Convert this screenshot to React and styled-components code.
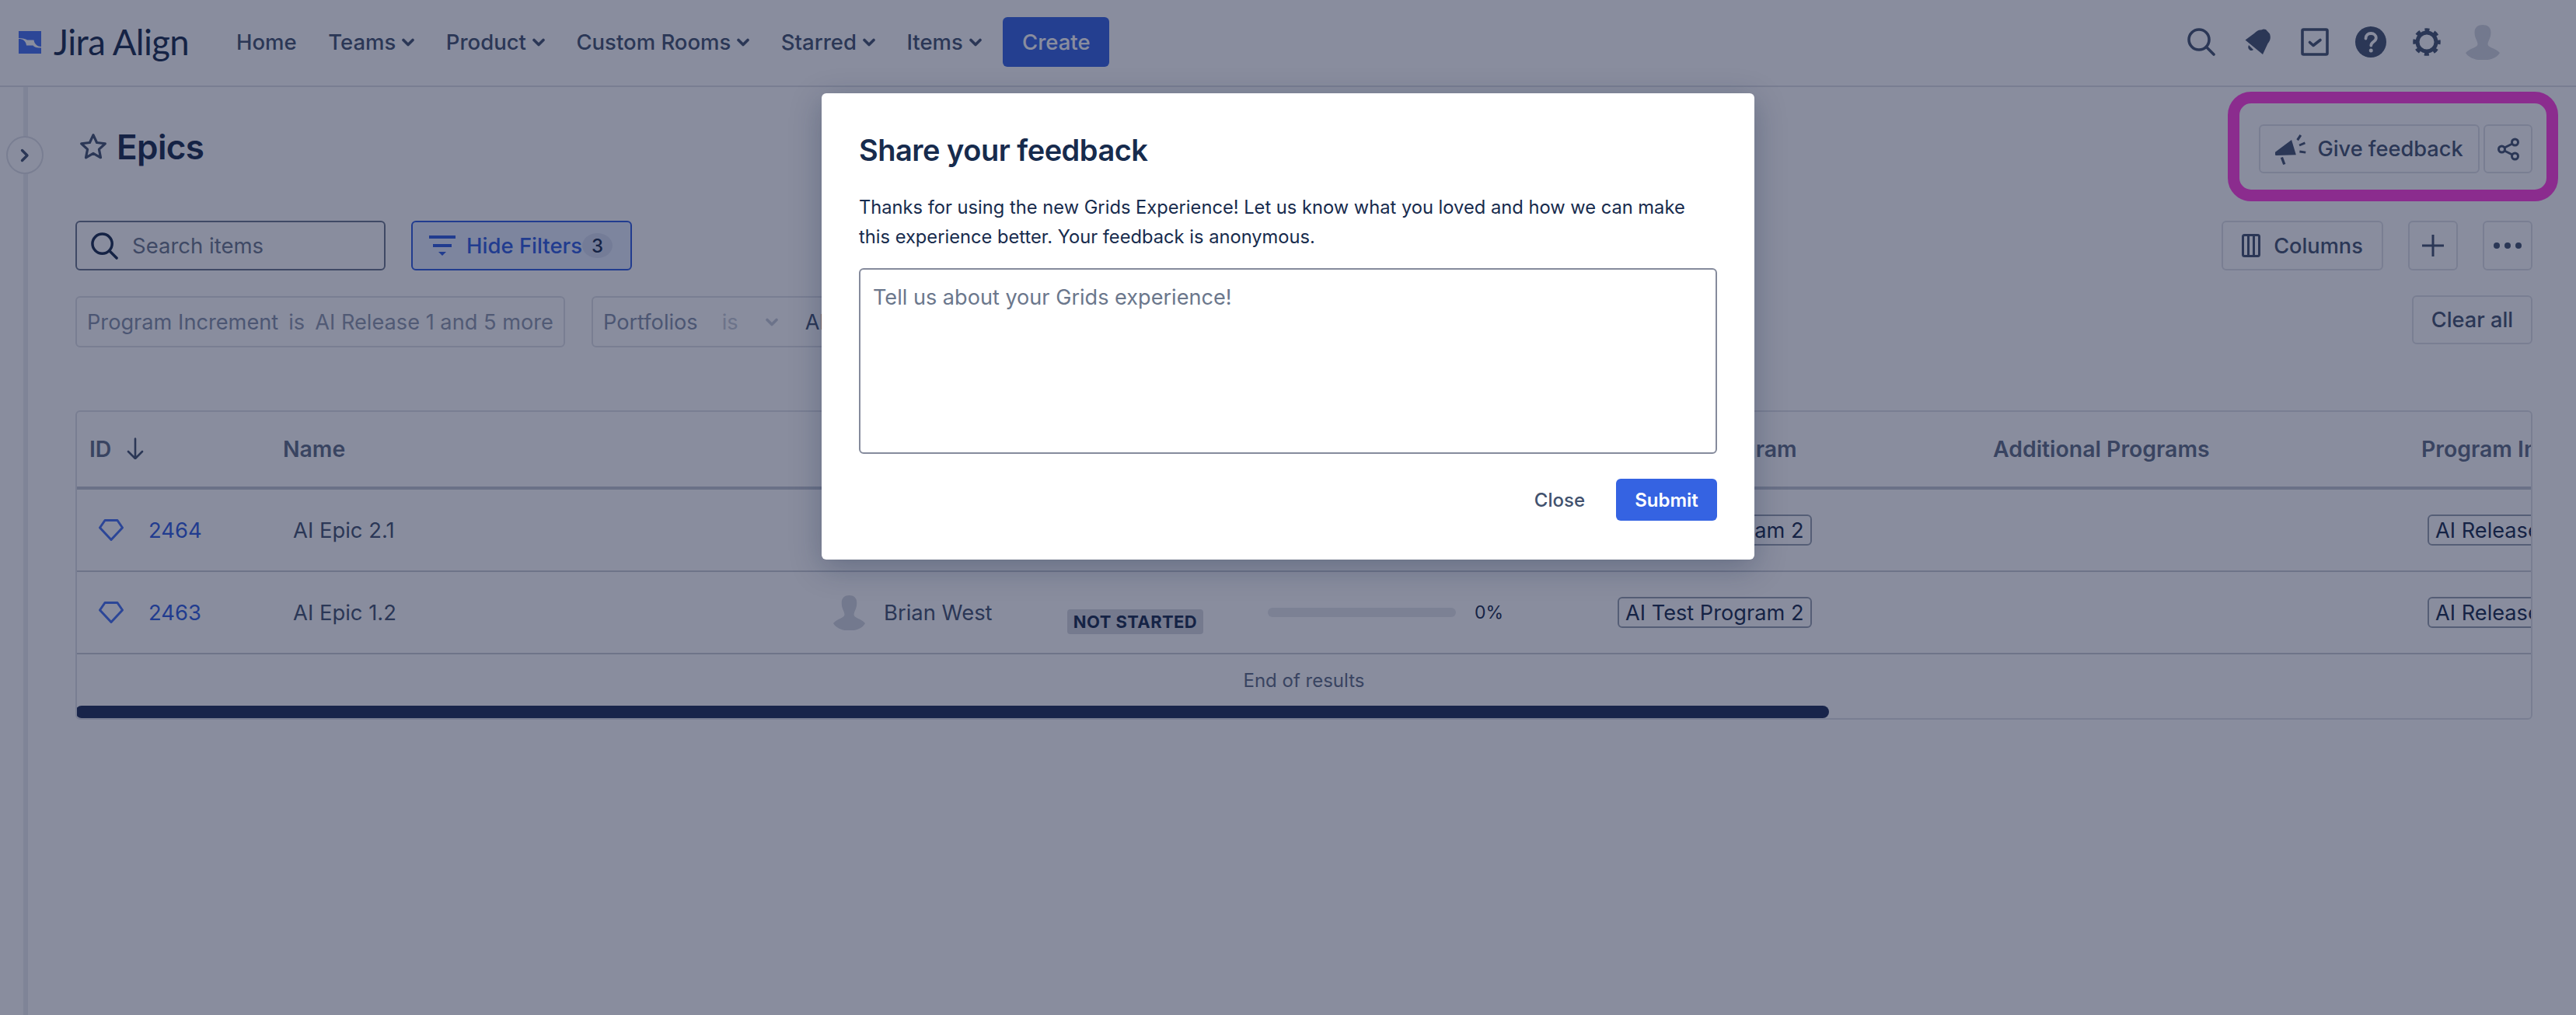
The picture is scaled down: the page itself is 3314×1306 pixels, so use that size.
import React from "react";
import styled, { createGlobalStyle } from "styled-components";

const Global = createGlobalStyle`
  html, body { margin: 0; padding: 0; background: #fff; }
  * { box-sizing: border-box; }
  body { font-family: Inter, "Liberation Sans", sans-serif; color: #172B4D; }
`;

const Page = styled.div`
  position: relative;
  width: 3314px;
  height: 1306px;
  overflow: hidden;
  background: #fff;
`;

/* ---------- top navigation ---------- */
const Nav = styled.header`
  height: 112px;
  display: flex;
  align-items: center;
  padding: 0 98px 2px 24px;
  border-bottom: 2px solid #DFE1E6;
`;
const Logo = styled.div`
  display: flex;
  align-items: center;
  gap: 16px;
  width: 280px;
  flex: none;
`;
const LogoWord = styled.span`
  font-family: Lato, sans-serif;
  font-weight: 400;
  font-size: 45.5px;
  line-height: 50px;
  letter-spacing: -0.6px;
  color: #172B4D;
`;
const Menu = styled.nav`
  display: flex;
  align-items: center;
  gap: 40.5px;
`;
const MenuItem = styled.span`
  display: flex;
  align-items: center;
  gap: 8px;
  font-size: 27.5px;
  font-weight: 500;
  color: #42526E;
  white-space: nowrap;
`;
const CreateButton = styled.button`
  height: 64px;
  width: 137px;
  margin-left: -13px;
  border: 0;
  border-radius: 6px;
  background: #3563E2;
  color: #fff;
  font: 500 27.5px Inter, sans-serif;
`;
const NavIcons = styled.div`
  margin-left: auto;
  display: flex;
  align-items: center;
  gap: 34px;
  & > :nth-child(2), & > :nth-child(3) { margin-left: 4px; }
  & > :nth-child(6) { margin-left: -2px; }
`;

/* ---------- body ---------- */
const Body = styled.div`
  display: flex;
  height: 1194px;
`;
const Rail = styled.aside`
  position: relative;
  flex: none;
  width: 36px;
  border-right: 6px solid #EBECF0;
`;
const RailToggle = styled.button`
  position: absolute;
  left: 8px;
  top: 63px;
  width: 48px;
  height: 49px;
  padding: 0;
  border: 2px solid #DFE1E6;
  border-radius: 50%;
  background: #fff;
  display: flex;
  align-items: center;
  justify-content: center;
`;
const Main = styled.main`
  flex: 1;
  min-width: 0;
  padding: 48px 56px 0 61px;
`;
const TitleRow = styled.div`
  display: flex;
  align-items: center;
  justify-content: space-between;
  height: 63px;
`;
const Title = styled.h1`
  margin: 0;
  display: flex;
  align-items: center;
  gap: 12px;
  padding: 0 0 5px 5px;
  font-size: 44px;
  font-weight: 600;
  letter-spacing: -0.6px;
  color: #172B4D;
`;
const ButtonGroup = styled.div`
  display: flex;
  align-items: center;
  gap: ${p => p.$gap}px;
`;
const OutlineButton = styled.button`
  height: ${p => p.$h || 64}px;
  width: ${p => p.$w}px;
  display: flex;
  align-items: center;
  justify-content: center;
  gap: ${p => p.$gap || 14}px;
  padding: 0;
  background: #fff;
  border: 2px solid #DFE1E6;
  border-radius: 6px;
  font: 500 27.2px Inter, sans-serif;
  color: #42526E;
`;
const ToolRow = styled.div`
  margin-top: 61px;
  display: flex;
  align-items: center;
  height: 64px;
`;
const SearchBox = styled.div`
  width: 399px;
  height: 64px;
  display: flex;
  align-items: center;
  gap: 18px;
  padding-left: 18px;
  border: 2px solid #6B778C;
  border-radius: 6px;
  font-size: 27.5px;
  color: #6B778C;
`;
const FilterToggle = styled.div`
  margin-left: 33px;
  width: 284px;
  height: 64px;
  display: flex;
  align-items: center;
  padding-left: 21px;
  background: #E6EEFF;
  border: 2px solid #2F5CE0;
  border-radius: 6px;
  font-size: 27.5px;
  font-weight: 500;
  color: #2F5CE0;
`;
const FilterLabel = styled.span`
  margin-left: 14px;
`;
const FilterCount = styled.span`
  width: 39px;
  height: 32px;
  display: flex;
  align-items: center;
  justify-content: center;
  border-radius: 50%;
  background: rgba(9, 30, 66, 0.08);
  color: #172B4D;
  font-size: 24px;
  font-weight: 500;
`;
const ToolActions = styled(ButtonGroup)`
  margin-left: auto;
`;
const FilterRow = styled.div`
  margin-top: 32px;
  height: 67px;
  display: flex;
  align-items: flex-start;
  gap: 34px;
`;
const FilterChip = styled.div`
  height: 66px;
  margin-top: 1px;
  padding: 0 13px;
  display: flex;
  align-items: center;
  white-space: nowrap;
  border: 2px solid #DFE1E6;
  border-radius: 6px;
  font-size: 27.2px;
  color: #8F99AD;
`;
const ChipField = styled.span`
  color: #8490A8;
`;
const ChipOperator = styled.span`
  margin-left: ${p => p.$ml}px;
  color: ${p => p.$muted ? "#C5CAD6" : "#8F99AD"};
`;
const ChipValue = styled.span`
  margin-left: ${p => p.$ml}px;
  color: ${p => p.$dark ? "#42526E" : "#8F99AD"};
`;
const ChipChevron = styled.span`
  margin-left: 34px;
  display: flex;
`;
const ClearAll = styled(OutlineButton)`
  margin-left: auto;
  flex: none;
`;

/* ---------- table ---------- */
const Table = styled.section`
  margin-top: 81px;
  width: 3161px;
  height: 398px;
  display: flex;
  flex-direction: column;
  overflow: hidden;
  border: 2px solid #DFE1E6;
  border-radius: 6px;
`;
const COLS = "249px 707px 301px 258px 450px 484px 551px 400px";
const HeadRow = styled.div`
  flex: none;
  display: grid;
  grid-template-columns: ${COLS};
  align-items: center;
  height: 100px;
  padding-bottom: 2px;
  border-bottom: 4px solid #C1C7D0;
`;
const HeadCell = styled.div`
  display: flex;
  align-items: center;
  gap: 20px;
  padding-left: 16px;
  font-size: 28.4px;
  font-weight: 600;
  color: #5E6C84;
  white-space: nowrap;
`;
const Row = styled.div`
  flex: none;
  display: grid;
  grid-template-columns: ${COLS};
  align-items: center;
  height: 106px;
  border-bottom: 2px solid #C8CCD4;
`;
const Cell = styled.div`
  display: flex;
  align-items: center;
  padding-left: ${p => p.$pl ?? 17}px;
  font-size: 27.4px;
  color: #42526E;
  white-space: nowrap;
`;
const IdLink = styled.a`
  margin-left: 32px;
  color: #2F5CE0;
`;
const OwnerName = styled.span`
  margin-left: 24px;
`;
const Lozenge = styled.span`
  position: relative;
  top: 12px;
  width: 175px;
  height: 32px;
  display: flex;
  align-items: center;
  justify-content: center;
  border-radius: 4px;
  background: #D6D8DF;
  color: #172B4D;
  font-size: 22px;
  font-weight: 700;
  letter-spacing: 0.4px;
`;
const ProgressTrack = styled.div`
  width: 242px;
  height: 12px;
  border-radius: 6px;
  background: #E4E6EB;
`;
const ProgressValue = styled.span`
  margin-left: 24px;
  font-size: 23px;
  color: #172B4D;
`;
const Tag = styled.span`
  height: 40px;
  padding: 0 8px;
  display: flex;
  align-items: center;
  border: 2px solid #97A0AF;
  border-radius: 6px;
  font-size: 27.2px;
  color: #172B4D;
`;
const EndRow = styled.div`
  flex: 1;
  display: flex;
  align-items: center;
  justify-content: center;
  font-size: 24px;
  color: #5E6C84;
`;
const ScrollThumb = styled.div`
  flex: none;
  width: 2256px;
  height: 16px;
  margin-left: -2px;
  border-radius: 8px;
  background: #1C2C56;
`;

/* ---------- overlay layers ---------- */
const Backdrop = styled.div`
  position: absolute;
  inset: 0;
  background: rgba(20, 28, 62, 0.5);
`;
const Modal = styled.div`
  position: absolute;
  left: 1057px;
  top: 120px;
  width: 1200px;
  height: 600px;
  padding: 48px;
  display: flex;
  flex-direction: column;
  background: #fff;
  border-radius: 6px;
  box-shadow: 0 10px 40px rgba(9, 30, 66, 0.28);
`;
const ModalTitle = styled.h2`
  margin: 0;
  font-size: 38px;
  line-height: 50px;
  font-weight: 600;
  letter-spacing: -0.5px;
  color: #172B4D;
`;
const ModalText = styled.p`
  margin: 30px 0 0;
  font-size: 23.7px;
  line-height: 38px;
  color: #172B4D;
`;
const Feedback = styled.div`
  margin-top: 21px;
  height: 239px;
  padding: 18px 16px;
  border: 2px solid #858B9C;
  border-radius: 6px;
  font-size: 27.1px;
  line-height: 36px;
  color: #6B778C;
`;
const ModalActions = styled.div`
  margin-top: 32px;
  display: flex;
  align-items: center;
  justify-content: flex-end;
  gap: 40px;
`;
const CloseLink = styled.button`
  padding: 0;
  border: 0;
  background: none;
  font: 500 24px Inter, sans-serif;
  color: #42526E;
`;
const SubmitButton = styled.button`
  width: 130px;
  height: 54px;
  border: 0;
  border-radius: 6px;
  background: #3563E2;
  color: #fff;
  font: 600 24px Inter, sans-serif;
`;
const Highlight = styled.div`
  position: absolute;
  left: 2866px;
  top: 118px;
  width: 425px;
  height: 141px;
  border: 15px solid #8B2C8E;
  border-radius: 30px;
`;

/* ---------- icons ---------- */
const LogoMark = () => (
  <svg width="29" height="29" viewBox="0 0 29 29" fill="#4470F0">
    <path d="M0 0H29V20C24 20 20.5 17 19.5 11.5H11C9 10 5 9 0 9Z" />
    <path d="M0 10C5 10 9.5 12.5 10 18.5H18.5C20 21 24 21.5 29 21.5V29H0Z" />
  </svg>
);
const Chevron = ({ color = "#42526E", w = 16 }) => (
  <svg width={w} height="11" viewBox="0 0 16 11" fill="none" stroke={color} strokeWidth="3.6" strokeLinecap="round" strokeLinejoin="round">
    <path d="M2 2.5l6 6 6-6" />
  </svg>
);
const SearchIcon = ({ size = 36, color = "#42526E", sw = 3.6 }) => (
  <svg width={size} height={size} viewBox="0 0 36 36" fill="none" stroke={color} strokeWidth={sw} strokeLinecap="round">
    <circle cx="15" cy="15" r="13" />
    <path d="M24.5 24.5L34 34" />
  </svg>
);
const BellIcon = () => (
  <svg width="34" height="35" viewBox="0 0 34 35" fill="#42526E">
    <path d="M0.5 14.5L12 6C15 3 18 1 21 1.5L24 0.5L27 1L32 6.5C33.5 11 33 15 29.5 19L23 33Z" />
    <path d="M5 21l6 6c-2 2-5 1-6-1-1-1-1-3 0-5z" />
  </svg>
);
const TaskIcon = () => (
  <svg width="36" height="36" viewBox="0 0 36 36" fill="none" stroke="#42526E" strokeLinejoin="round">
    <rect x="2" y="2" width="32" height="32" rx="1.5" strokeWidth="3.6" />
    <path d="M11.5 18.5l4.5 4 9-7" strokeWidth="3.6" strokeLinecap="round" />
  </svg>
);
const HelpIcon = () => (
  <svg width="40" height="40" viewBox="0 0 40 40">
    <circle cx="20" cy="20" r="20" fill="#42526E" />
    <path d="M13.5 15.5c0-4 3-6.5 6.8-6.5 3.7 0 6.5 2.4 6.5 5.8 0 5-6.5 5-6.5 9.7" fill="none" stroke="#fff" strokeWidth="3.8" strokeLinecap="round" />
    <circle cx="20.2" cy="31" r="2.5" fill="#fff" />
  </svg>
);
const GearIcon = () => (
  <svg width="36" height="36" viewBox="0 0 36 36" fill="none" stroke="#42526E">
    <circle cx="18" cy="18" r="12" strokeWidth="5" />
    <circle cx="18" cy="18" r="15.5" strokeWidth="4.5" strokeDasharray="6 6.17" strokeDashoffset="3" />
  </svg>
);
const Avatar = ({ w, h }) => (
  <svg width={w} height={h} viewBox="0 0 44 45" fill="#D3D6DE" preserveAspectRatio="none">
    <path d="M22 0c6 0 10.500 3 10.500 9.500 0 3-.5 5.500-1.500 8-1 2.500-2.500 5-2.500 7 0 2 1.500 3.500 5 5 4 1.700 8 3.500 10.500 6.500-3 5.500-11 9.500-22 9.500S3 41 0 36c2.500-3 6.500-4.800 10.500-6.500 3.500-1.500 5-3 5-5 0-2-1.500-4.500-2.500-7-1-2.500-1.500-5-1.500-8C11.500 3 16 0 22 0z" />
  </svg>
);
const ChevronRight = () => (
  <svg width="12" height="18" viewBox="0 0 12 18" fill="none" stroke="#42526E" strokeWidth="3.4" strokeLinecap="round" strokeLinejoin="round">
    <path d="M2.500 2.500l6.500 6.500-6.500 6.500" />
  </svg>
);
const StarIcon = () => (
  <svg width="36" height="36" viewBox="0 0 34 34" fill="none" stroke="#42526E" strokeWidth="3" strokeLinejoin="round">
    <path d="M17 2.500l4.300 9.300 10.200 1.200-7.500 7 2 10-9-5-9 5 2-10-7.500-7 10.200-1.200z" />
  </svg>
);
const Megaphone = () => (
  <svg width="40" height="40" viewBox="0 0 38 38" fill="#42526E">
    <path d="M0 22.500L20 7.500l5.500 18.500-24.500 0.500c-1.500 0-2-3-1-4z" />
    <path d="M6.500 29.500l3-1 3.200 8.500-3 1z" />
    <path d="M26 7l4-6 2.400 1.700-4 6z" />
    <path d="M29 13l7-3 1 2.500-7 3z" />
    <path d="M30 20.500l7.500 1-.4 2.700-7.500-1z" />
  </svg>
);
const ShareIcon = () => (
  <svg width="28" height="30" viewBox="0 0 28 30" fill="none" stroke="#42526E" strokeWidth="3">
    <circle cx="5.500" cy="15" r="4" />
    <circle cx="22.500" cy="6" r="4" />
    <circle cx="22.500" cy="24" r="4" />
    <path d="M9 13l10-5M9 17l10 5" />
  </svg>
);
const ColumnsIcon = () => (
  <svg width="24" height="30" viewBox="0 0 24 30" fill="none" stroke="#42526E" strokeWidth="3" strokeLinejoin="round">
    <rect x="1.500" y="1.500" width="21" height="27" rx="2" />
    <path d="M8.500 2v26M15.500 2v26" />
  </svg>
);
const PlusIcon = () => (
  <svg width="30" height="30" viewBox="0 0 30 30" stroke="#42526E" strokeWidth="3">
    <path d="M1 15h28M15 1v28" />
  </svg>
);
const DotsIcon = () => (
  <svg width="38" height="10" viewBox="0 0 38 10" fill="#42526E">
    <circle cx="5" cy="5" r="4" />
    <circle cx="19" cy="5" r="4" />
    <circle cx="33" cy="5" r="4" />
  </svg>
);
const FunnelIcon = () => (
  <svg width="34" height="26" viewBox="0 0 34 26" fill="#2F5CE0">
    <rect x="0" y="0" width="34" height="4" />
    <rect x="5" y="11" width="24" height="4" />
    <path d="M12 21h10l-5 5z" />
  </svg>
);
const ArrowDown = () => (
  <svg width="22" height="28" viewBox="0 0 22 28" fill="none" stroke="#42526E" strokeWidth="2.600" strokeLinecap="round" strokeLinejoin="round">
    <path d="M11 1.500v25M2 18l9 9 9-9" />
  </svg>
);
const Diamond = () => (
  <svg width="32" height="28" viewBox="0 0 32 28" fill="none" stroke="#4470F0" strokeWidth="3" strokeLinejoin="round">
    <path d="M8 1.500h16l6.500 9.500L16 26.500 1.500 11z" />
  </svg>
);

/* ---------- data ---------- */
const menu = ["Teams", "Product", "Custom Rooms", "Starred", "Items"];
const epics = [
  { id: "2464", name: "AI Epic 2.1" },
  { id: "2463", name: "AI Epic 1.2" },
];

const EpicRow = ({ id, name }) => (
  <Row>
    <Cell $pl={28}><Diamond /><IdLink>{id}</IdLink></Cell>
    <Cell $pl={29}>{name}</Cell>
    <Cell><Avatar w={41} h={45} /><OwnerName>Brian West</OwnerName></Cell>
    <Cell><Lozenge>NOT STARTED</Lozenge></Cell>
    <Cell><ProgressTrack /><ProgressValue>0%</ProgressValue></Cell>
    <Cell><Tag>AI Test Program 2</Tag></Cell>
    <Cell />
    <Cell $pl={24}><Tag>AI Release 1</Tag></Cell>
  </Row>
);

export default function App() {
  return (
    <Page>
      <Global />
      <Nav>
        <Logo>
          <LogoMark />
          <LogoWord>Jira Align</LogoWord>
        </Logo>
        <Menu>
          <MenuItem>Home</MenuItem>
          {menu.map(m => (
            <MenuItem key={m}>{m}<Chevron /></MenuItem>
          ))}
          <CreateButton>Create</CreateButton>
        </Menu>
        <NavIcons>
          <SearchIcon />
          <BellIcon />
          <TaskIcon />
          <HelpIcon />
          <GearIcon />
          <Avatar w={44} h={45} />
        </NavIcons>
      </Nav>
      <Body>
        <Rail>
          <RailToggle aria-label="Expand"><ChevronRight /></RailToggle>
        </Rail>
        <Main>
          <TitleRow>
            <Title><StarIcon />Epics</Title>
            <ButtonGroup $gap={5}>
              <OutlineButton $h={63} $w={284}><Megaphone />Give feedback</OutlineButton>
              <OutlineButton $h={63} $w={63}><ShareIcon /></OutlineButton>
            </ButtonGroup>
          </TitleRow>
          <ToolRow>
            <SearchBox><SearchIcon size={35} color="#172B4D" />Search items</SearchBox>
            <FilterToggle>
              <FunnelIcon />
              <FilterLabel>Hide Filters</FilterLabel>
              <FilterCount>3</FilterCount>
            </FilterToggle>
            <ToolActions $gap={32}>
              <OutlineButton $w={208} $gap={17}><ColumnsIcon />Columns</OutlineButton>
              <OutlineButton $w={64}><PlusIcon /></OutlineButton>
              <OutlineButton $w={64}><DotsIcon /></OutlineButton>
            </ToolActions>
          </ToolRow>
          <FilterRow>
            <FilterChip>
              <ChipField>Program Increment</ChipField>
              <ChipOperator $ml={13}>is</ChipOperator>
              <ChipValue $ml={13}>AI Release 1 and 5 more</ChipValue>
            </FilterChip>
            <FilterChip>
              <ChipField>Portfolios</ChipField>
              <ChipOperator $ml={31} $muted>is</ChipOperator>
              <ChipChevron><Chevron color="#C5CAD6" w={18} /></ChipChevron>
              <ChipValue $ml={34} $dark>All</ChipValue>
            </FilterChip>
            <ClearAll $h={63} $w={155}>Clear all</ClearAll>
          </FilterRow>
          <Table>
            <HeadRow>
              <HeadCell>ID<ArrowDown /></HeadCell>
              <HeadCell>Name</HeadCell>
              <HeadCell />
              <HeadCell />
              <HeadCell />
              <HeadCell>Primary Program</HeadCell>
              <HeadCell>Additional Programs</HeadCell>
              <HeadCell>Program Increment</HeadCell>
            </HeadRow>
            {epics.map(e => <EpicRow key={e.id} {...e} />)}
            <EndRow>End of results</EndRow>
            <ScrollThumb />
          </Table>
        </Main>
      </Body>
      <Backdrop />
      <Modal>
        <ModalTitle>Share your feedback</ModalTitle>
        <ModalText>
          Thanks for using the new Grids Experience! Let us know what you loved and how we can make
          this experience better. Your feedback is anonymous.
        </ModalText>
        <Feedback>Tell us about your Grids experience!</Feedback>
        <ModalActions>
          <CloseLink>Close</CloseLink>
          <SubmitButton>Submit</SubmitButton>
        </ModalActions>
      </Modal>
      <Highlight />
    </Page>
  );
}
